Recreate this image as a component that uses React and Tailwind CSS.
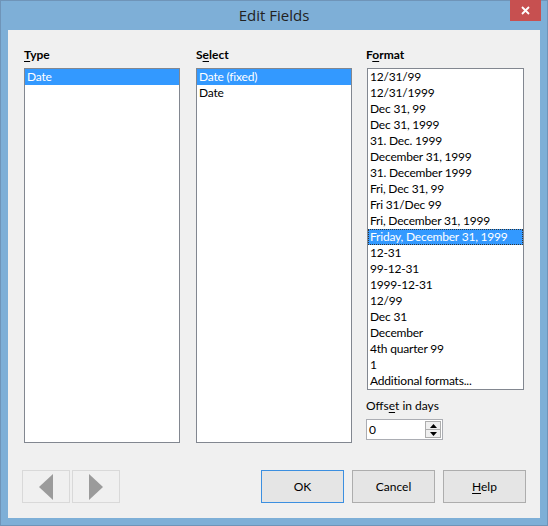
import React from "react";

const formats = [
  "12/31/99",
  "12/31/1999",
  "Dec 31, 99",
  "Dec 31, 1999",
  "31. Dec. 1999",
  "December 31, 1999",
  "31. December 1999",
  "Fri, Dec 31, 99",
  "Fri 31/Dec 99",
  "Fri, December 31, 1999",
  "Friday, December 31, 1999",
  "12-31",
  "99-12-31",
  "1999-12-31",
  "12/99",
  "Dec 31",
  "December",
  "4th quarter 99",
  "1",
  "Additional formats...",
];

const font = { fontFamily: "Lato, 'Liberation Sans', sans-serif" };

function Row({ children, selected, focused }) {
  return (
    <div
      className={
        "h-[16px] leading-[16px] pl-[2px] whitespace-nowrap text-[12px] tracking-[-0.2px] " +
        (selected ? "bg-[#3399ff] text-white " : "text-black ") +
        (focused ? "outline-1 outline-dotted outline-[#333] -outline-offset-1" : "")
      }
    >
      {children}
    </div>
  );
}

function Label({ pre, u, post, bold }) {
  return (
    <div className={"h-[16px] leading-[16px] text-[12px] text-black " + (bold ? "font-bold" : "")}>
      {pre}
      <span className="underline underline-offset-2">{u}</span>
      {post}
    </div>
  );
}

export default function App() {
  return (
    <div className="w-[548px] h-[526px] bg-[#7eafd7] border border-[#6f94b8] flex flex-col" style={font}>
      <div className="h-[29px] relative flex items-center justify-center">
        <span className="text-[15px] text-[#222] -mt-[1px]" style={{ fontFamily: "'Open Sans', sans-serif" }}>
          Edit Fields
        </span>
        <div className="absolute right-[6px] top-[-1px] w-[31px] h-[21px] bg-[#c75050] flex items-center justify-center">
          <svg width="9" height="9" viewBox="0 0 9 9">
            <path d="M1 1 L8 8 M8 1 L1 8" stroke="white" strokeWidth="1.8" />
          </svg>
        </div>
      </div>
      <div className="ml-[7px] w-[532px] h-[488px] bg-[#f0f0f0] flex flex-col">
        <div className="flex pl-[16px] pt-[17px]">
          <div className="w-[156px] flex flex-col">
            <Label bold u="T" post="ype" />
            <div className="mt-[5px] h-[375px] bg-white border border-[#828790]">
              <Row selected>Date</Row>
            </div>
          </div>
          <div className="w-[156px] ml-[16px] flex flex-col">
            <Label bold pre="S" u="e" post="lect" />
            <div className="mt-[5px] h-[375px] bg-white border border-[#828790]">
              <Row selected>Date (fixed)</Row>
              <Row>Date</Row>
            </div>
          </div>
          <div className="w-[158px] ml-[14px] flex flex-col">
            <Label bold pre="F" u="o" post="rmat" />
            <div className="mt-[5px] ml-[1px] h-[322px] w-[157px] bg-white border border-[#828790]">
              {formats.map((f, i) => (
                <Row key={i} selected={i === 10} focused={i === 10}>
                  {f}
                </Row>
              ))}
            </div>
            <div className="mt-[8px]">
              <Label pre="Offs" u="e" post="t in days" />
            </div>
            <div className="mt-[5px] w-[77px] h-[21px] bg-white border border-[#abadb3] flex">
              <div className="flex-1 text-[12px] leading-[19px] pl-[2px] text-black">0</div>
              <div className="w-[16px] m-[1px] flex flex-col border border-[#adadad] bg-[#efefef]">
                <div className="flex-1 flex items-center justify-center border-b border-[#adadad]">
                  <svg width="7" height="4" viewBox="0 0 7 4">
                    <path d="M3.5 0 L7 4 L0 4 Z" fill="#000" />
                  </svg>
                </div>
                <div className="flex-1 flex items-center justify-center">
                  <svg width="7" height="4" viewBox="0 0 7 4">
                    <path d="M0 0 L7 0 L3.5 4 Z" fill="#000" />
                  </svg>
                </div>
              </div>
            </div>
          </div>
        </div>
        <div className="flex mt-[27px] pl-[14px] pr-[14px]">
          <div className="w-[48px] h-[33px] border border-[#d9d9d9] flex items-center justify-center">
            <svg width="14" height="26" viewBox="0 0 14 26">
              <path d="M14 0 L14 26 L0 13 Z" fill="#9b9b9b" />
            </svg>
          </div>
          <div className="w-[48px] h-[33px] ml-[2px] border border-[#d9d9d9] flex items-center justify-center">
            <svg width="14" height="26" viewBox="0 0 14 26">
              <path d="M0 0 L0 26 L14 13 Z" fill="#9b9b9b" />
            </svg>
          </div>
          <div className="flex-1" />
          <div className="w-[83px] h-[33px] border border-[#3c8fe0] bg-[#e5e5e5] flex items-center justify-center text-[12px] text-black">
            OK
          </div>
          <div className="w-[83px] h-[33px] ml-[8px] border border-[#adadad] bg-[#e5e5e5] flex items-center justify-center text-[12px] text-black">
            Cancel
          </div>
          <div className="w-[83px] h-[33px] ml-[8px] border border-[#adadad] bg-[#e5e5e5] flex items-center justify-center text-[12px] text-black">
            <span>
              <span className="underline underline-offset-2">H</span>elp
            </span>
          </div>
        </div>
      </div>
    </div>
  );
}
